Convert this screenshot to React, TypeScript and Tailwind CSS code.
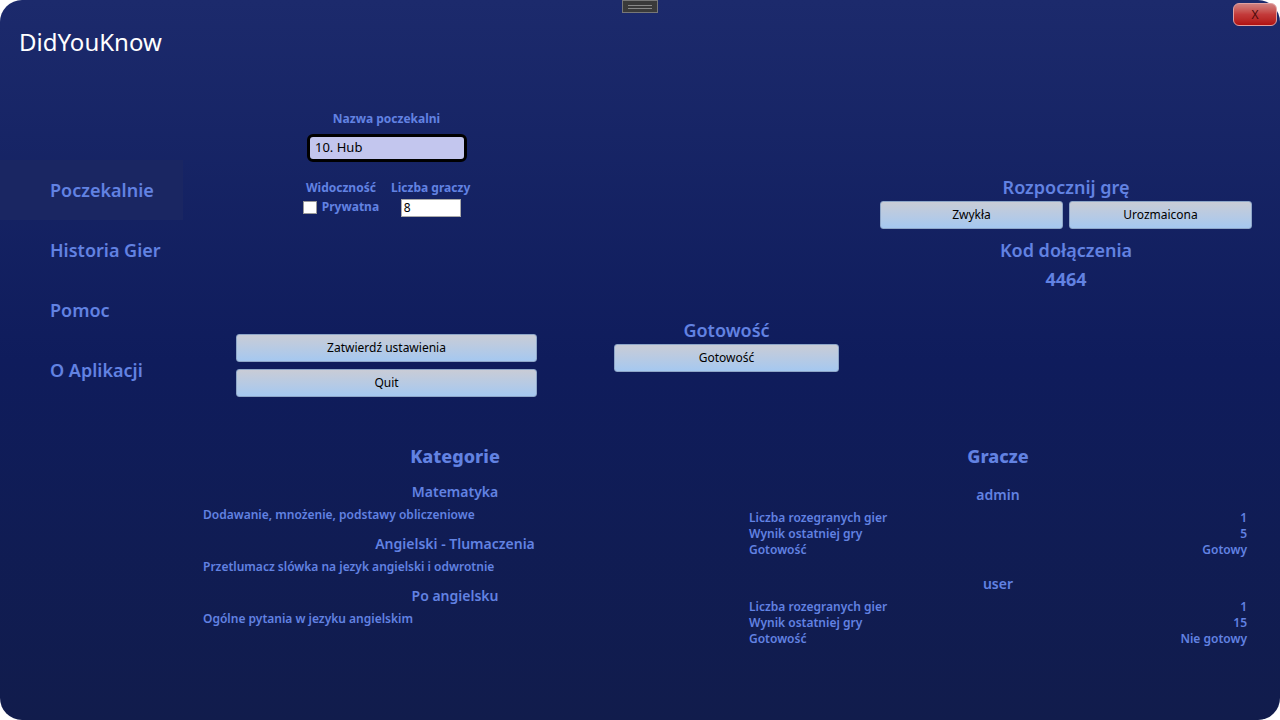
import React from "react"

const btn =
  "h-[28px] rounded-[3px] border border-[#8ea6c8] bg-gradient-to-b from-[#c9ccd6] to-[#a5c8f0] text-[12px] text-black flex items-center justify-center"

const categories = [
  { name: "Matematyka", desc: "Dodawanie, mnożenie, podstawy obliczeniowe" },
  { name: "Angielski - Tlumaczenia", desc: "Przetlumacz slówka na jezyk angielski i odwrotnie" },
  { name: "Po angielsku", desc: "Ogólne pytania w jezyku angielskim" },
]

const players = [
  { name: "admin", games: "1", score: "5", ready: "Gotowy" },
  { name: "user", games: "1", score: "15", ready: "Nie gotowy" },
]

const menu = ["Poczekalnie", "Historia Gier", "Pomoc", "O Aplikacji"]

function App() {
  return (
    <div className="w-[1280px] h-[720px] bg-white overflow-hidden" style={{ fontFamily: '"Noto Sans", sans-serif' }}>
      <div className="relative w-full h-full rounded-[22px] bg-gradient-to-b from-[#1c2a6c] via-[#0f1c5c] to-[#111c4c] text-[#6282e2]">
        {/* uchwyt okna */}
        <div className="absolute left-[622px] top-0 w-[36px] h-[13px] bg-[#3a3a3a] border border-[#777] flex flex-col justify-center items-center gap-[2px]">
          <div className="w-[24px] h-px bg-[#888]" />
          <div className="w-[24px] h-px bg-[#888]" />
        </div>
        {/* zamknij */}
        <div className="absolute left-[1233px] top-[3px] w-[44px] h-[23px] rounded-[6px] bg-gradient-to-b from-[#d08080] via-[#c33a3a] to-[#b01010] border border-[#e0a0a0] flex items-center justify-center text-[12px] text-[#4a0a0a]">
          X
        </div>

        <div className="h-[80px] pl-[19px] pt-[26px] text-[24px] leading-[32px] text-white">DidYouKnow</div>

        <div className="flex">
          {/* menu boczne */}
          <div className="w-[183px] pt-[80px] flex flex-col">
            {menu.map((m, i) => (
              <div
                key={m}
                className={`h-[60px] pl-[50px] flex items-center text-[18px] font-semibold ${i === 0 ? "bg-[#1a2662]" : ""}`}
              >
                {m}
              </div>
            ))}
          </div>

          <div className="flex-1 flex flex-col">
            {/* ustawienia */}
            <div className="h-[340px] flex">
              <div className="ml-[53px] w-[301px] flex flex-col items-center">
                <div className="mt-[31px] text-[12px] font-bold leading-[16px]">Nazwa poczekalni</div>
                <div className="mt-[7px] ml-[1px] w-[160px] h-[28px] rounded-[6px] border-[3px] border-black bg-[#c3c6ee] text-black text-[13px] pl-[5px] flex items-center">
                  10. Hub
                </div>
                <div className="mt-[18px] flex gap-[12px]">
                  <div className="flex flex-col items-center">
                    <div className="text-[12px] font-bold leading-[16px]">Widoczność</div>
                    <div className="mt-[2px] flex items-center gap-[5px]">
                      <div className="w-[14px] h-[13px] bg-white border border-[#999]" />
                      <span className="text-[12px] font-bold">Prywatna</span>
                    </div>
                  </div>
                  <div className="flex flex-col items-center">
                    <div className="text-[12px] font-bold leading-[16px]">Liczba graczy</div>
                    <div className="mt-[3px] w-[60px] h-[18px] bg-white border border-[#aaa] text-black text-[12px] pl-[2px] leading-[16px]">8</div>
                  </div>
                </div>
                <div className="mt-[117px] w-full flex flex-col gap-[7px]">
                  <div className={btn}>Zatwierdź ustawienia</div>
                  <div className={btn}>Quit</div>
                </div>
              </div>

              <div className="ml-[77px] w-[225px] flex flex-col items-center pt-[238px]">
                <div className="text-[18px] font-semibold leading-[24px]">Gotowość</div>
                <div className={`${btn} w-full mt-[2px]`}>Gotowość</div>
              </div>

              <div className="ml-[41px] w-[372px] flex flex-col items-center pt-[95px]">
                <div className="text-[18px] font-semibold leading-[24px]">Rozpocznij grę</div>
                <div className="mt-[2px] w-full flex gap-[6px]">
                  <div className={`${btn} flex-1`}>Zwykła</div>
                  <div className={`${btn} flex-1`}>Urozmaicona</div>
                </div>
                <div className="mt-[9px] text-[18px] font-semibold leading-[24px]">Kod dołączenia</div>
                <div className="mt-[5px] text-[18px] font-bold leading-[24px]">4464</div>
              </div>
            </div>

            {/* kategorie i gracze */}
            <div className="flex pt-[23px]">
              <div className="ml-[20px] w-[504px] flex flex-col">
                <div className="text-center text-[18px] font-extrabold leading-[26px]">Kategorie</div>
                <div className="mt-[12px] flex flex-col gap-[7px]">
                  {categories.map((c) => (
                    <div key={c.name} className="flex flex-col">
                      <div className="text-center text-[14px] font-semibold leading-[22px]">{c.name}</div>
                      <div className="mt-[1px] text-[12px] font-semibold leading-[22px]">{c.desc}</div>
                    </div>
                  ))}
                </div>
              </div>

              <div className="ml-[42px] w-[498px] flex flex-col">
                <div className="text-center text-[18px] font-extrabold leading-[26px]">Gracze</div>
                <div className="mt-[16px] flex flex-col gap-[16px]">
                  {players.map((p) => (
                    <div key={p.name} className="flex flex-col">
                      <div className="text-center text-[14px] font-semibold leading-[20px]">{p.name}</div>
                      <div className="mt-[5px] text-[12px] font-semibold leading-[16px]">
                        <div className="flex justify-between"><span>Liczba rozegranych gier</span><span>{p.games}</span></div>
                        <div className="flex justify-between"><span>Wynik ostatniej gry</span><span>{p.score}</span></div>
                        <div className="flex justify-between"><span>Gotowość</span><span>{p.ready}</span></div>
                      </div>
                    </div>
                  ))}
                </div>
              </div>
            </div>
          </div>
        </div>
      </div>
    </div>
  )
}

export default App
